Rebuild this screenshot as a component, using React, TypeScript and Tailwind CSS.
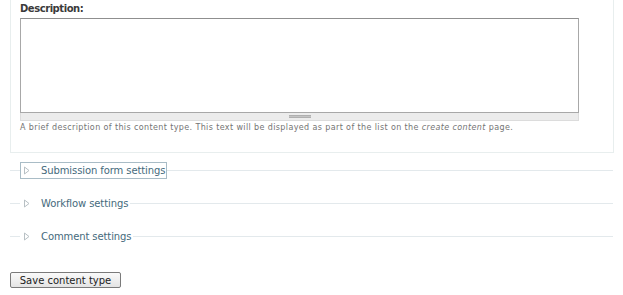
import React from "react";

function Legend({ label, focused }: { label: string; focused?: boolean }) {
  return (
    <div className="flex items-center h-[17px] ml-[10px] mr-[10px]">
      <div className="w-[10px] h-px bg-[#e3e9ec]" />
      <div
        className={
          "flex items-center h-[17px] pl-px pr-px " +
          (focused ? "border border-[#a9bcc6]" : "border border-transparent")
        }
      >
        <svg width="7" height="9" viewBox="0 0 7 9" className="mr-[11px] ml-px">
          <path d="M1.5 1 L6 4.5 L1.5 8 Z" fill="none" stroke="#b8c0c4" strokeWidth="1" />
        </svg>
        <span className="text-[10px] leading-[13px] tracking-[-0.1px] text-[#456a7c] whitespace-nowrap">{label}</span>
      </div>
      <div className="flex-1 h-px bg-[#e3e9ec]" />
    </div>
  );
}

export default function App() {
  return (
    <div className="w-[623px] h-[295px] bg-white overflow-hidden font-['DejaVu_Sans',sans-serif]">
      <div className="ml-[10px] mr-[9px] border-x border-b border-[#e8eeee] pl-[9px] pt-[2px] h-[153px]">
        <div className="text-[10px] leading-[14px] font-bold tracking-[-0.45px] text-[#3a3a3a]">Description:</div>
        <div className="w-[559px] mt-[2px]">
          <div className="h-[95px] border border-[#a8a8a8] border-t-[#8f8f8f] bg-white" />
          <div className="h-[8px] bg-[#ececec] border-x border-b border-[#dcdcdc] flex justify-center items-center">
            <div className="w-[22px] h-[3px] bg-[#c4c4c4] border-y border-[#b0b0b0]" />
          </div>
        </div>
        <div className="text-[8px] leading-[12px] mt-[1px] text-[#747474] tracking-[0.38px] whitespace-nowrap">
          A brief description of this content type. This text will be displayed as part of the list on the{" "}
          <em>create content</em> page.
        </div>
      </div>
      <div className="mt-[9px] flex flex-col gap-[16px]">
        <Legend label="Submission form settings" focused />
        <Legend label="Workflow settings" />
        <Legend label="Comment settings" />
      </div>
      <div className="ml-[10px] mt-[27px]">
        <button className="h-[16px] w-[111px] border border-[#7a7a7a] rounded-[2px] bg-gradient-to-b from-[#fafafa] to-[#e4e4e4] text-[10px] leading-[13px] text-[#222] flex items-center justify-center">
          Save content type
        </button>
      </div>
    </div>
  );
}
